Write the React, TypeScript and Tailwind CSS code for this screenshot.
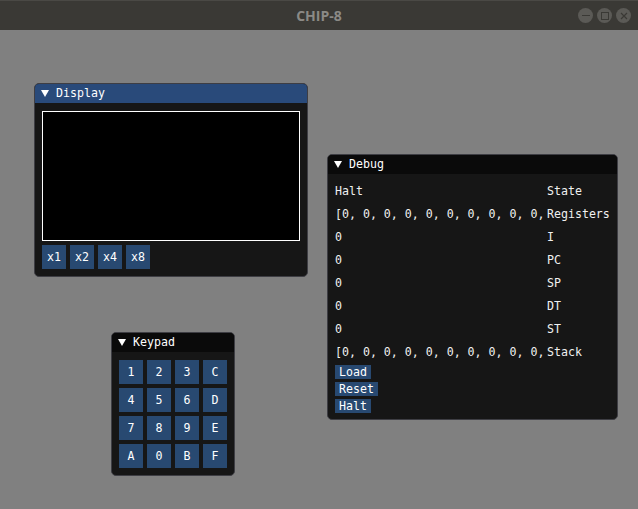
import type { ReactNode } from "react";

const KEYS = ["1", "2", "3", "C", "4", "5", "6", "D", "7", "8", "9", "E", "A", "0", "B", "F"];

// the table column only has room for the first ten values
const ZEROS = "[0, 0, 0, 0, 0, 0, 0, 0, 0, 0,";

const DEBUG_ROWS: [string, string][] = [
  ["Halt", "State"],
  [ZEROS, "Registers"],
  ["0", "I"],
  ["0", "PC"],
  ["0", "SP"],
  ["0", "DT"],
  ["0", "ST"],
  [ZEROS, "Stack"],
];

interface ImWindowProps {
  title: string;
  active?: boolean;
  className: string;
  children: ReactNode;
}

// ImGui-ish floating window
function ImWindow({ title, active, className, children }: ImWindowProps) {
  return (
    <div
      className={`absolute flex flex-col overflow-hidden rounded-[5px] border border-[#3e3e44] bg-[#161616] ${className}`}
    >
      <div
        className={`flex h-[19px] shrink-0 items-center ${active ? "bg-[#294a7a]" : "bg-[#0a0a0a]"}`}
      >
        <svg width="8" height="7" viewBox="0 0 8 7" className="ml-[6px] mr-[7px]">
          <polygon points="0,0 8,0 4,7" fill="#fff" />
        </svg>
        <span className="text-white">{title}</span>
      </div>
      {children}
    </div>
  );
}

function ImButton({ label, className }: { label: string; className: string }) {
  return (
    <div className={`flex items-center justify-center bg-[#284971] text-white ${className}`}>
      {label}
    </div>
  );
}

export default function App() {
  return (
    <div className="relative flex h-[509px] w-[638px] flex-col overflow-hidden bg-[#808080] font-['DejaVu_Sans_Mono',monospace] text-[11.6px] leading-[13px]">
      {/* OS title bar */}
      <div className="relative flex h-[30px] shrink-0 items-center justify-center border-t border-[#4a4945] bg-[#3a3935]">
        <span className="font-['Open_Sans',sans-serif] text-[14px] font-bold text-[#8b8a86]">CHIP-8</span>
        <div className="absolute right-[7px] top-[7px] flex gap-[4px]">
          <div className="flex h-[15px] w-[15px] items-center justify-center rounded-full bg-[#5b5a56]">
            <div className="h-[1px] w-[8px] bg-[#3a3935]" />
          </div>
          <div className="flex h-[15px] w-[15px] items-center justify-center rounded-full bg-[#5b5a56]">
            <div className="h-[8px] w-[8px] border border-[#3a3935]" />
          </div>
          <div className="flex h-[15px] w-[15px] items-center justify-center rounded-full bg-[#5b5a56]">
            <svg width="8" height="8" viewBox="0 0 8 8">
              <path d="M1 1 L7 7 M7 1 L1 7" stroke="#3a3935" strokeWidth="1.2" />
            </svg>
          </div>
        </div>
      </div>

      <ImWindow title="Display" active className="left-[34px] top-[83px] h-[194px] w-[274px]">
        <div className="flex flex-col gap-[4px] px-[7px] pt-[8px]">
          <div className="h-[130px] w-[258px] border border-white bg-black" />
          <div className="flex gap-[4px]">
            {["x1", "x2", "x4", "x8"].map((s) => (
              <ImButton key={s} label={s} className="h-[24px] w-[24px]" />
            ))}
          </div>
        </div>
      </ImWindow>

      <ImWindow title="Debug" className="left-[327px] top-[154px] h-[266px] w-[291px]">
        <div className="flex flex-col px-[7px] pt-[6px] text-[#f0f0f0]">
          {DEBUG_ROWS.map(([val, name], i) => (
            <div key={i} className="flex h-[23px] items-center">
              <span className="w-[212px] whitespace-pre">{val}</span>
              <span className="whitespace-pre">{name}</span>
            </div>
          ))}
          <div className="mt-[1px] flex flex-col items-start gap-[3px]">
            {["Load", "Reset", "Halt"].map((s) => (
              <ImButton key={s} label={s} className="h-[14px] px-[4px]" />
            ))}
          </div>
        </div>
      </ImWindow>

      <ImWindow title="Keypad" className="left-[111px] top-[332px] h-[144px] w-[124px]">
        <div className="grid grid-cols-4 gap-[4px] px-[7px] pt-[8px]">
          {KEYS.map((k) => (
            <ImButton key={k} label={k} className="h-[24px] w-[24px]" />
          ))}
        </div>
      </ImWindow>
    </div>
  );
}
